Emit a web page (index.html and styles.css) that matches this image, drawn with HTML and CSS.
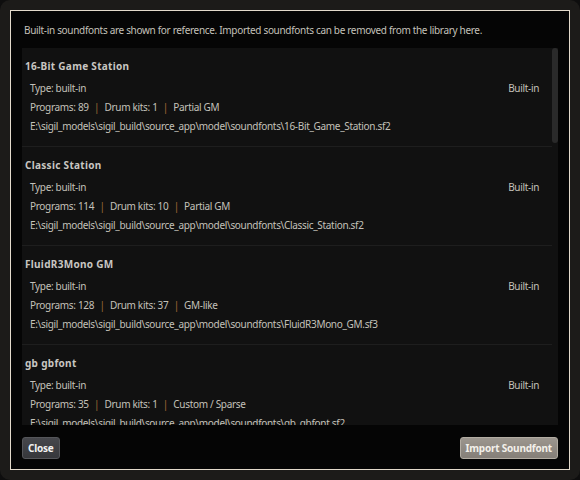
FILE: index.html
```html
<!DOCTYPE html>
<html lang="en">
<head>
    <meta charset="UTF-8">
    <title>Soundfont Library</title>
    <link rel="stylesheet" href="styles.css">
</head>
<body>
    <div class="window">
        <div class="dialog">
            <p class="intro">Built-in soundfonts are shown for reference. Imported soundfonts can be removed from the library here.</p>

            <div class="library">
                <div class="font-list">
                    <div class="font-item">
                        <div class="font-name">16-Bit Game Station</div>
                        <div class="font-meta">
                            <div class="meta-row">
                                <span>Type: built-in</span>
                                <span class="badge">Built-in</span>
                            </div>
                            <div class="meta-row">
                                <span>Programs: 89 <i class="sep">|</i> Drum kits: 1 <i class="sep">|</i> Partial GM</span>
                            </div>
                            <div class="meta-row">
                                <span>E:\sigil_models\sigil_build\source_app\model\soundfonts\16-Bit_Game_Station.sf2</span>
                            </div>
                        </div>
                    </div>

                    <div class="font-item">
                        <div class="font-name">Classic Station</div>
                        <div class="font-meta">
                            <div class="meta-row">
                                <span>Type: built-in</span>
                                <span class="badge">Built-in</span>
                            </div>
                            <div class="meta-row">
                                <span>Programs: 114 <i class="sep">|</i> Drum kits: 10 <i class="sep">|</i> Partial GM</span>
                            </div>
                            <div class="meta-row">
                                <span>E:\sigil_models\sigil_build\source_app\model\soundfonts\Classic_Station.sf2</span>
                            </div>
                        </div>
                    </div>

                    <div class="font-item">
                        <div class="font-name">FluidR3Mono GM</div>
                        <div class="font-meta">
                            <div class="meta-row">
                                <span>Type: built-in</span>
                                <span class="badge">Built-in</span>
                            </div>
                            <div class="meta-row">
                                <span>Programs: 128 <i class="sep">|</i> Drum kits: 37 <i class="sep">|</i> GM-like</span>
                            </div>
                            <div class="meta-row">
                                <span>E:\sigil_models\sigil_build\source_app\model\soundfonts\FluidR3Mono_GM.sf3</span>
                            </div>
                        </div>
                    </div>

                    <div class="font-item">
                        <div class="font-name">gb gbfont</div>
                        <div class="font-meta">
                            <div class="meta-row">
                                <span>Type: built-in</span>
                                <span class="badge">Built-in</span>
                            </div>
                            <div class="meta-row">
                                <span>Programs: 35 <i class="sep">|</i> Drum kits: 1 <i class="sep">|</i> Custom / Sparse</span>
                            </div>
                            <div class="meta-row">
                                <span>E:\sigil_models\sigil_build\source_app\model\soundfonts\gb_gbfont.sf2</span>
                            </div>
                        </div>
                    </div>
                </div>
                <div class="scroll-track">
                    <div class="scroll-thumb"></div>
                </div>
            </div>

            <div class="footer">
                <button class="btn btn-close">Close</button>
                <button class="btn btn-import">Import Soundfont</button>
            </div>
        </div>
    </div>
</body>
</html>
```

FILE: styles.css
```css
:root {
    --frame-bg: #1c1b19;
    --dialog-bg: #050505;
    --panel-bg: #111111;
    --text: #c4c1ba;
    --accent: #a06c36;
}

html {
    background: #0e0e0e;
}

body {
    margin: 0;
    font-family: 'Noto Sans', 'Liberation Sans', sans-serif;
    font-size: 10px;
    letter-spacing: -0.32px;
    color: var(--text);
}

.window {
    width: 580px;
    height: 480px;
    box-sizing: border-box;
    padding: 10px;
    background: var(--frame-bg);
    border-radius: 10px;
}

.dialog {
    height: 100%;
    box-sizing: border-box;
    border: 1px solid #e3dacb;
    background: var(--dialog-bg);
    padding: 12px 11px 10px 11px;
    display: flex;
    flex-direction: column;
}

.intro {
    margin: 0 0 10px 2px;
    line-height: 15px;
}

.library {
    flex: 1;
    min-height: 0;
    display: flex;
    background: var(--panel-bg);
}

.font-list {
    flex: 1;
    overflow: hidden;
}

.font-item {
    padding: 11px 13px 12px 3px;
    border-bottom: 1px solid #1e1e1e;
}

.font-name {
    font-weight: bold;
    line-height: 15px;
    letter-spacing: 0.3px;
    color: #c8c6c2;
}

.font-meta {
    margin-top: 7px;
    padding-left: 5px;
    display: flex;
    flex-direction: column;
    gap: 4px;
}

.meta-row {
    display: flex;
    justify-content: space-between;
    line-height: 15px;
    white-space: nowrap;
}

.sep {
    font-style: normal;
    color: var(--accent);
    margin: 0 3px;
}

.scroll-track {
    width: 6px;
    flex-shrink: 0;
}

.scroll-thumb {
    height: 95px;
    background: #2a2a2a;
    border-radius: 3px;
}

.footer {
    display: flex;
    justify-content: space-between;
    padding-top: 12px;
}

.btn {
    height: 22px;
    padding: 0 5px;
    font-family: inherit;
    font-size: 10px;
    font-weight: bold;
    letter-spacing: -0.2px;
    border-radius: 3px;
    cursor: pointer;
}

.btn-close {
    color: #f2f2f2;
    background: linear-gradient(#46474c, #36373b);
    border: 1px solid #55565a;
}

.btn-import {
    color: #f3f0ea;
    background: linear-gradient(#9c968e, #857f78);
    border: 1px solid #b2aca2;
}
```
